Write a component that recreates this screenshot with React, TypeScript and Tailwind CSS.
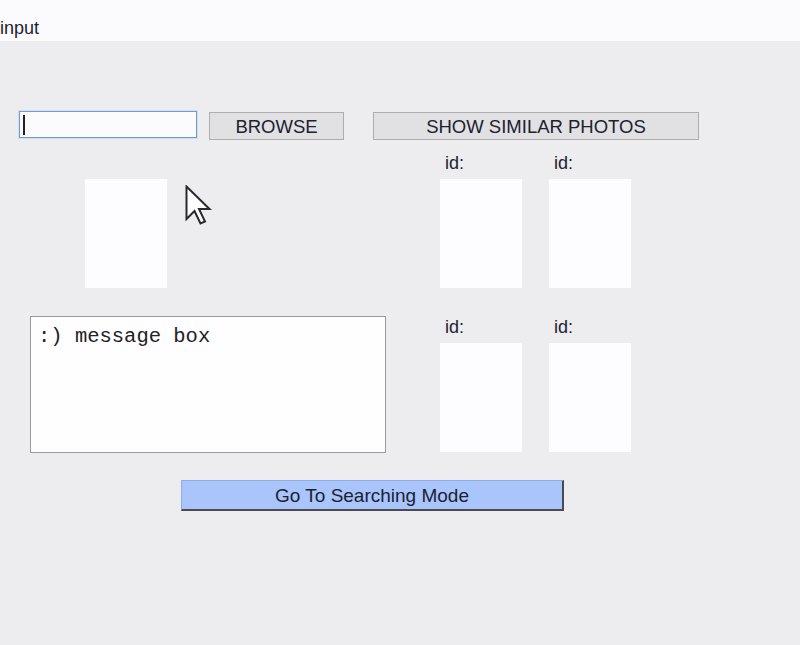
import React from "react";

const sans = { fontFamily: '"Liberation Sans", Arial, sans-serif' };

function Label() {
  return (
    <div className="h-[20px] text-[18px] leading-[20px] pt-[1px] pl-[5px] mb-[7px] text-[#1c2230]">id:</div>
  );
}

function Box() {
  return <div className="w-[82px] h-[109px] bg-[#fdfcfe]" />;
}

export default function App() {
  return (
    <div className="min-h-screen bg-[#edecee] text-[#1c2230]" style={sans}>
      <div className="h-[41px] bg-[#fbfafc] pt-[18px] text-[18px] leading-[20px]">input</div>
      <div className="relative pt-[70px]">
        <div className="flex items-start">
          <div className="ml-[19px] w-[178px] h-[27px] bg-[#fbfbfd] border border-[#6f9ccc] shadow-[0_0_0_1px_#cfe0f2] flex items-center pl-[3px]">
            <div className="w-[2px] h-[20px] bg-[#222]" />
          </div>
          <div className="ml-[12px] mt-[1px] w-[135px] h-[28px] pt-[2px] bg-[#e1e0e2] border border-[#adadad] flex items-center justify-center text-[18.5px] leading-none">
            BROWSE
          </div>
          <div className="ml-[29px] mt-[1px] w-[326px] h-[28px] pt-[2px] bg-[#e1e0e2] border border-[#adadad] flex items-center justify-center text-[18.5px] leading-none">
            SHOW SIMILAR PHOTOS
          </div>
        </div>
        <div className="flex">
          <div className="ml-[30px] w-[356px] flex flex-col">
            <div className="ml-[55px] mt-[39px] w-[82px] h-[109px] bg-[#fdfcfe]" />
            <div className="mt-[28px] h-[137px] bg-[#fefdff] border border-[#9a9a9a] px-[7px] pt-[7px] text-[20.5px] leading-[26px] text-[#222]" style={{ fontFamily: '"Liberation Mono", "DejaVu Sans Mono", monospace' }}>
              :) message box
            </div>
          </div>
          <div className="ml-[54px] pt-[12px] grid grid-cols-[82px_82px] gap-x-[27px] gap-y-[27px]">
            <div>
              <Label />
              <Box />
            </div>
            <div>
              <Label />
              <Box />
            </div>
            <div>
              <Label />
              <Box />
            </div>
            <div>
              <Label />
              <Box />
            </div>
          </div>
        </div>
        <div className="ml-[181px] mt-[27px] w-[383px] h-[31px] pt-[1px] bg-[#a9c5fb] border-t border-l border-[#8eaee6] border-b-2 border-r-2 border-b-[#4a4a50] border-r-[#4a4a50] flex items-center justify-center text-[19px] leading-none text-[#1a2233]">
          Go To Searching Mode
        </div>
        <svg className="absolute left-[185px] top-[144px]" width="27" height="40" viewBox="0 0 27 40">
          <path d="M1.5 1.5 L1.5 34 L9.5 26 L15.5 38.5 L20 36.5 L14 24 L24.5 24 Z" fill="#ffffff" stroke="#2a2a2a" strokeWidth="2" strokeLinejoin="miter" />
        </svg>
      </div>
    </div>
  );
}
